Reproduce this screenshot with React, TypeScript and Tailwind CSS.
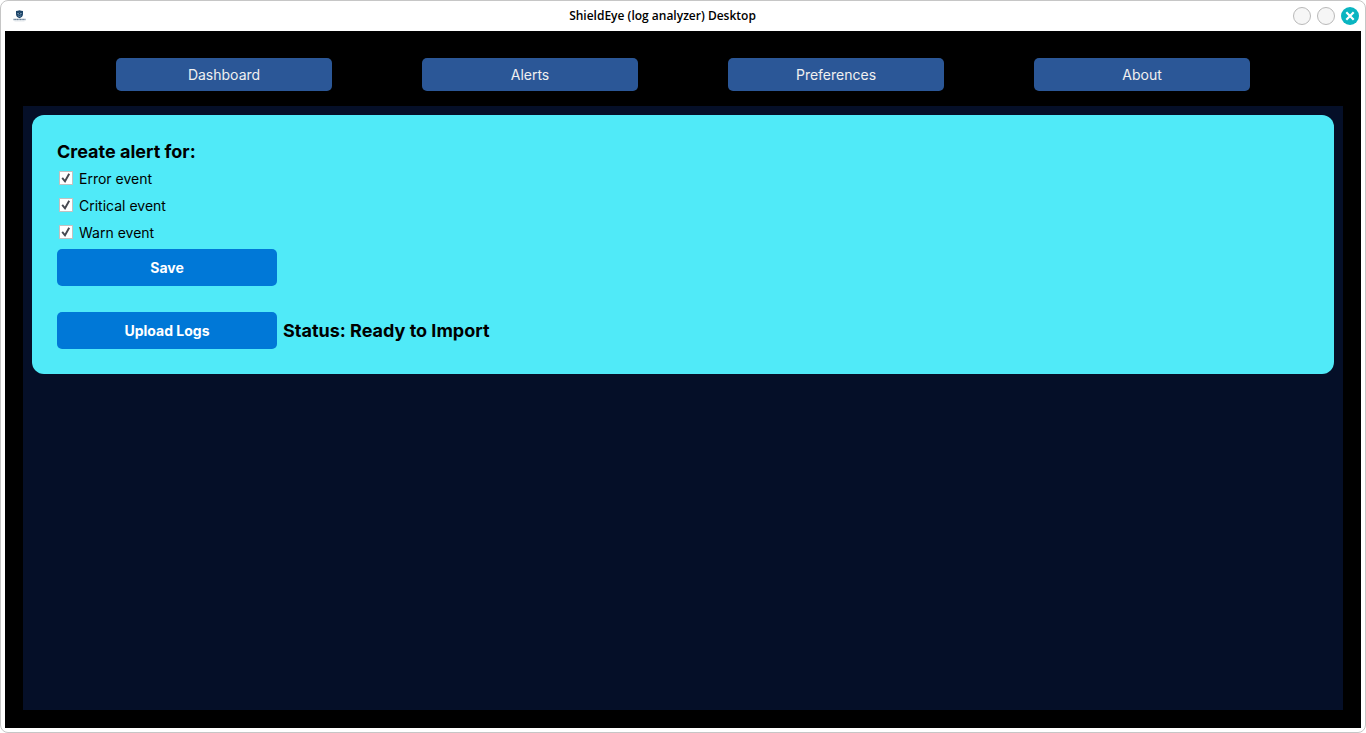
import React, { useState } from 'react';

const tabs = ['Dashboard', 'Alerts', 'Preferences', 'About'];

const eventTypes = [
  { id: 'error', label: 'Error event' },
  { id: 'critical', label: 'Critical event' },
  { id: 'warn', label: 'Warn event' },
];

function ShieldLogo() {
  return (
    <svg className="w-[13px] h-3" viewBox="0 0 13 12" fill="none" aria-hidden="true">
      <path d="M6.5 0.2C5.4 0.8 4.2 1 3 1V4C3 6.2 4.4 7.4 6.5 8.3C8.6 7.4 10 6.2 10 4V1C8.8 1 7.6 0.8 6.5 0.2Z" fill="#1d4468" />
      <path d="M4 3.6C5.4 2.3 7.6 2.3 9 3.6C7.6 5 5.4 5 4 3.6Z" fill="#8fb0c9" />
      <circle cx="6.5" cy="3.6" r="0.9" fill="#16324f" />
      <path d="M4.8 5.7L6.5 6.5L8.2 5.7" stroke="#7fa3bf" strokeWidth="0.7" />
      <path d="M0.5 9.5H12.5" stroke="#6b8299" strokeWidth="1.4" strokeDasharray="1.3 0.3" />
      <path d="M1.5 11.2H11.5" stroke="#dde2e8" strokeWidth="0.6" />
    </svg>
  );
}

function TitleBar() {
  return (
    <header className="flex items-center h-[30px] pl-3 pr-[6px]">
      <ShieldLogo />
      <h1 className="grow pl-[6px] text-center font-['Open_Sans',sans-serif] text-[12px] leading-4 font-semibold text-black">
        ShieldEye (log analyzer) Desktop
      </h1>
      <div className="flex gap-[6px]">
        <button aria-label="Minimize" className="w-[18px] h-[18px] rounded-full border border-[#b9b9b9] bg-[#f6f6f6]" />
        <button aria-label="Maximize" className="w-[18px] h-[18px] rounded-full border border-[#b9b9b9] bg-[#f6f6f6]" />
        <button aria-label="Close" className="w-[18px] h-[18px] rounded-full bg-[#0ab5c1] flex items-center justify-center">
          <svg className="w-[18px] h-[18px]" viewBox="0 0 18 18" fill="none" stroke="#fff" strokeWidth="2.2">
            <path d="M5.3 5.3L12.7 12.7M12.7 5.3L5.3 12.7" />
          </svg>
        </button>
      </div>
    </header>
  );
}

function EventCheckbox({ id, label }: { id: string; label: string }) {
  const [checked, setChecked] = useState(true);

  return (
    <div className="flex items-start h-[27px] pl-[2px]">
      <div className="grid pt-[6px]">
        <input
          id={id}
          type="checkbox"
          checked={checked}
          onChange={() => setChecked(!checked)}
          className="peer appearance-none col-start-1 row-start-1 w-[14px] h-[14px] bg-white border border-[#c3c0c0]"
        />
        <svg
          className="col-start-1 row-start-1 w-[14px] h-[14px] pointer-events-none invisible peer-checked:visible"
          viewBox="0 0 14 14"
          fill="none"
          stroke="#454850"
        >
          <path d="M3.2 6.8L6 10.3L10.2 2.8" strokeWidth="1.9" />
        </svg>
      </div>
      <label htmlFor={id} className="pl-[6px] text-[14px] leading-[27px]">
        {label}
      </label>
    </div>
  );
}

function ActionButton({ children }: { children: React.ReactNode }) {
  return (
    <button className="block w-[220px] h-[37px] rounded-[5px] bg-[#0078d7] text-white text-[14px] font-bold">
      {children}
    </button>
  );
}

export default function App() {
  return (
    <div className="flex flex-col min-h-screen bg-white border border-[#c6c6c6] rounded-lg font-[Inter,sans-serif]">
      <TitleBar />

      <div className="grow flex flex-col mx-1 mb-1 p-[18px] bg-black">
        <nav className="grid grid-cols-4 px-12 pt-[9px] pb-[15px]">
          {tabs.map((tab) => (
            <div key={tab} className="px-[45px]">
              <button className="w-full h-[33px] rounded-[5px] bg-[#2b5797] text-[#f0f0f0] text-[14px]">{tab}</button>
            </div>
          ))}
        </nav>

        <main className="grow p-[9px] bg-[#050f28]">
          <section className="p-[25px] rounded-[12px] bg-[#50eaf8] text-black">
            <h2 className="text-[18px] leading-[23px] font-bold mb-[2px]">Create alert for:</h2>
            {eventTypes.map((event) => (
              <EventCheckbox key={event.id} id={event.id} label={event.label} />
            ))}
            <div className="mt-[3px]">
              <ActionButton>Save</ActionButton>
            </div>
            <div className="flex items-center gap-[6px] mt-[26px]">
              <ActionButton>Upload Logs</ActionButton>
              <p className="text-[18px] leading-[23px] font-bold">Status: Ready to Import</p>
            </div>
          </section>
        </main>
      </div>
    </div>
  );
}
